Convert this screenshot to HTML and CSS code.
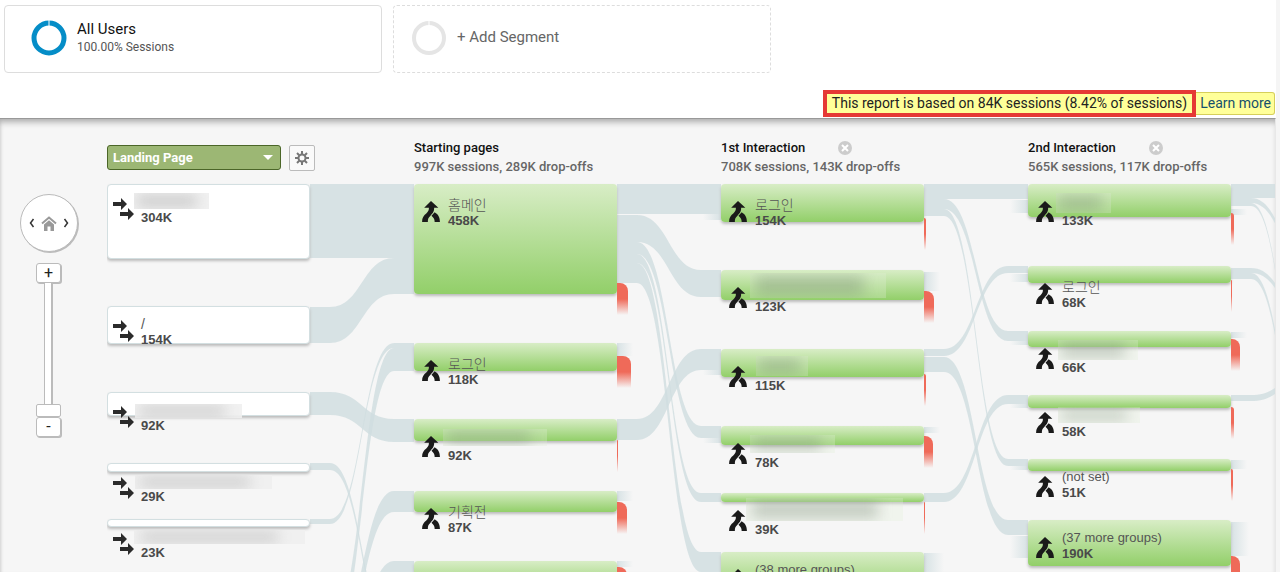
FILE: index.html
```html
<!DOCTYPE html>
<html lang="ko">
<head>
    <meta charset="UTF-8">
    <meta name="viewport" content="width=device-width, initial-scale=1.0">
    <title>Behavior Flow</title>
    <link rel="stylesheet" href="styles.css">
</head>
<body>
    <header class="report-header">
        <div class="segments">
            <button type="button" class="segment">
                <svg class="segment-ring" width="36" height="36" viewBox="0 0 36 36" fill="none">
                    <circle cx="18" cy="18" r="15" stroke="#058dc7" stroke-width="5"/>
                    <path d="M18 0V6" stroke="#fff" stroke-width="1"/>
                </svg>
                <span class="segment-text">
                    <span class="segment-name">All Users</span>
                    <span class="segment-share">100.00% Sessions</span>
                </span>
            </button>
            <button type="button" class="segment segment-add">
                <svg class="segment-ring" width="36" height="36" viewBox="0 0 36 36" fill="none">
                    <circle cx="18" cy="18" r="15" stroke="#e5e5e5" stroke-width="4"/>
                    <path d="M18 0V6" stroke="#fff" stroke-width="1"/>
                </svg>
                <span class="segment-label">+ Add Segment</span>
            </button>
        </div>

        <div class="notice">
            <span class="notice-text">This report is based on 84K sessions (8.42% of sessions)</span>
            <a class="notice-link" href="#">Learn more</a>
        </div>
    </header>

    <main class="flow">
        <!-- Pan and zoom controls -->
        <div class="controls">
            <div class="pan">
                <button type="button" class="pan-arrow" aria-label="Previous step">
                    <svg width="6" height="10" viewBox="0 0 6 10" fill="none"><path d="M4.500 1L1.500 5L4.500 9" stroke="#333" stroke-width="1.500"/></svg>
                </button>
                <button type="button" class="pan-home" aria-label="Home">
                    <svg width="16" height="15" viewBox="0 0 16 15">
                        <path d="M1 7.500L8 1.500L15 7.500" fill="none" stroke="#999" stroke-width="2"/>
                        <path d="M3 8.500L8 4.300L13 8.500V15H9.500V10.500H6.500V15H3Z" fill="#999"/>
                    </svg>
                </button>
                <button type="button" class="pan-arrow" aria-label="Next step">
                    <svg width="6" height="10" viewBox="0 0 6 10" fill="none"><path d="M1.500 1L4.500 5L1.500 9" stroke="#333" stroke-width="1.500"/></svg>
                </button>
            </div>
            <button type="button" class="zoom-button" aria-label="Zoom in">+</button>
            <input class="zoom-slider" type="range" min="0" max="10" value="0" aria-label="Zoom level">
            <button type="button" class="zoom-button" aria-label="Zoom out">-</button>
        </div>

        <div class="chart">
            <div class="steps">
                <div class="dimension">
                    <span class="dimension-box">
                        <select class="dimension-select" aria-label="Dimension">
                            <option>Landing Page</option>
                        </select>
                        <svg class="dimension-caret" width="10" height="5" viewBox="0 0 10 5"><path d="M0 0H10L5 5Z" fill="#fff"/></svg>
                    </span>
                    <button type="button" class="dimension-settings" aria-label="Settings">
                        <svg width="14" height="14" viewBox="0 0 14 14" fill="none" stroke="#777">
                            <circle cx="7" cy="7" r="3.500" stroke-width="2"/>
                            <path d="M7 0V3M7 11V14M0 7H3M11 7H14M2 2L4.200 4.200M9.800 9.800L12 12M12 2L9.800 4.200M4.200 9.800L2 12" stroke-width="2"/>
                        </svg>
                    </button>
                </div>
                <div class="step">
                    <div class="step-title">Starting pages</div>
                    <div class="step-total">997K sessions, 289K drop-offs</div>
                </div>
                <div class="step">
                    <div class="step-title">1st Interaction
                        <button type="button" class="step-remove" aria-label="Remove step">
                            <svg width="14" height="14" viewBox="0 0 14 14"><circle cx="7" cy="7" r="7" fill="#ccc"/><path d="M4 4L10 10M10 4L4 10" stroke="#fff" stroke-width="2"/></svg>
                        </button>
                    </div>
                    <div class="step-total">708K sessions, 143K drop-offs</div>
                </div>
                <div class="step">
                    <div class="step-title">2nd Interaction
                        <button type="button" class="step-remove" aria-label="Remove step">
                            <svg width="14" height="14" viewBox="0 0 14 14"><circle cx="7" cy="7" r="7" fill="#ccc"/><path d="M4 4L10 10M10 4L4 10" stroke="#fff" stroke-width="2"/></svg>
                        </button>
                    </div>
                    <div class="step-total">565K sessions, 117K drop-offs</div>
                </div>
            </div>

            <div class="canvas" id="canvas">
                <svg class="links" id="links">
                    <defs>
                        <linearGradient id="fade-out"><stop offset="0" stop-color="#cfdde0"/><stop offset="1" stop-color="#cfdde0" stop-opacity="0"/></linearGradient>
                        <linearGradient id="fade-in"><stop offset="0" stop-color="#cfdde0" stop-opacity="0"/><stop offset="1" stop-color="#cfdde0"/></linearGradient>
                    </defs>
                </svg>
            </div>
        </div>
    </main>

    <script src="script.js"></script>
</body>
</html>
```

FILE: styles.css
```css
* {
    box-sizing: border-box;
}

body {
    display: flex;
    flex-direction: column;
    height: 100vh;
    margin: 0;
    padding-right: 4px;
    overflow: hidden;
    background: #f5f5f5;
    font-family: Roboto, "Noto Sans CJK KR", sans-serif;
}

button {
    margin: 0;
    padding: 0;
    border: 0;
    background: none;
    font-family: inherit;
    cursor: pointer;
}

svg {
    display: block;
}

/* Header */
.report-header {
    flex: none;
    padding-top: 5px;
    background: #fff;
}

.segments {
    display: flex;
    gap: 11px;
    padding-left: 4px;
}

.segment {
    display: flex;
    flex: 0 1 378px;
    align-items: center;
    gap: 10px;
    height: 68px;
    padding: 0 0 2px 26px;
    border: 1px solid #ddd;
    border-radius: 4px;
    text-align: left;
}

.segment-add {
    padding-left: 17px;
    border-style: dashed;
}

.segment-name {
    display: block;
    color: #111;
    font-size: 15px;
    line-height: 18px;
}

.segment-share {
    display: block;
    padding-bottom: 1px;
    color: #555;
    font-size: 12px;
    line-height: 18px;
}

.segment-label {
    padding-bottom: 2px;
    color: #666;
    font-size: 15px;
    line-height: 18px;
}

.notice {
    display: flex;
    justify-content: flex-end;
    align-items: center;
    margin-top: 17px;
    padding: 0 1px 1px 0;
    font-size: 14px;
}

.notice-text {
    height: 27px;
    padding: 0 5px;
    border: 4px solid #e53935;
    background: #ffff99;
    color: #222;
    line-height: 19px;
    white-space: nowrap;
}

.notice-link {
    height: 23px;
    padding: 0 3px 0 4px;
    border: 1px solid #d6cf5a;
    border-left: 0;
    border-radius: 0 3px 3px 0;
    background: #ffff99;
    color: #15506b;
    line-height: 21px;
    text-decoration: none;
    white-space: nowrap;
}

/* Flow */
.flow {
    display: grid;
    flex: 1;
    grid-template-columns: 107px 1fr;
    min-height: 0;
    overflow: hidden;
    border-top: 1px solid #999;
    border-right: 1px solid #e8e8e8;
    background: #f6f6f6;
    box-shadow: inset 0 6px 6px -3px #aaa, inset 3px 0 3px -2px #ddd;
}

.controls {
    display: flex;
    flex-direction: column;
    align-items: center;
    padding: 75px 10px 0 0;
}

.pan {
    display: flex;
    justify-content: center;
    align-items: center;
    gap: 6px;
    width: 58px;
    height: 58px;
    margin-bottom: 11px;
    border: 1px solid #bbb;
    border-radius: 50%;
    background: #fff;
    box-shadow: 1px 1px 0 #bbb;
}

.zoom-button {
    width: 25px;
    height: 20px;
    border: 1px solid #bbb;
    border-radius: 3px;
    background: #fff;
    box-shadow: 1px 1px 0 #bbb;
    color: #222;
    font-size: 16px;
    line-height: 16px;
}

.zoom-slider {
    width: 25px;
    height: 134px;
    margin: 0;
    appearance: none;
    background: none;
    writing-mode: vertical-lr;
    direction: rtl;
}

.zoom-slider::-webkit-slider-runnable-track {
    width: 9px;
    border: solid #bbb;
    border-width: 0 2px 0 1px;
    background: #fff;
}

.zoom-slider::-webkit-slider-thumb {
    width: 25px;
    height: 13px;
    margin-left: -9px;
    appearance: none;
    border: 1px solid #bbb;
    border-radius: 2px;
    background: #fff;
}

.chart {
    min-width: 0;
    overflow: hidden;
}

.steps {
    display: grid;
    grid-template-columns: repeat(4, 307px);
    height: 65px;
    padding-top: 19px;
}

.dimension {
    display: flex;
    gap: 8px;
    padding-top: 7px;
}

.dimension-box {
    position: relative;
}

.dimension-select {
    display: block;
    width: 174px;
    height: 25px;
    padding: 0 5px;
    appearance: none;
    border: 1px solid #4b6628;
    border-radius: 3px;
    background: #9cb774;
    color: #fff;
    font-family: inherit;
    font-size: 13px;
    font-weight: bold;
}

.dimension-caret {
    position: absolute;
    top: 10px;
    right: 8px;
    pointer-events: none;
}

.dimension-settings {
    display: flex;
    justify-content: center;
    align-items: center;
    width: 26px;
    height: 26px;
    border: 1px solid #bbb;
    border-radius: 2px;
    background: #fafafa;
}

.step {
    font-size: 13px;
    font-weight: 500;
    line-height: 19px;
}

.step-title {
    display: flex;
    align-items: center;
    gap: 33px;
    color: #111;
}

.step-total {
    color: #666;
}

/* Nodes and links of the diagram */
.canvas {
    position: relative;
    height: 600px;
}

.links {
    position: absolute;
    width: 100%;
    height: 100%;
}

.link {
    fill: #cfdde0;
    fill-opacity: 0.8;
}

.node {
    position: absolute;
    width: 203px;
    border-radius: 4px;
    background: linear-gradient(#d8edc6, #92cf69);
    box-shadow: 0 2px 3px #bbb;
}

.node-landing {
    border: 1px solid #d3dfe1;
    background: #fff;
}

.node-info {
    position: absolute;
    display: grid;
    grid-template-columns: 18px auto;
    column-gap: 8px;
    padding: 12px 0 0 8px;
    color: #555;
    font-family: "Liberation Sans", "Noto Sans CJK KR", sans-serif;
    font-size: 13px;
    line-height: 16px;
    white-space: nowrap;
}

.node-info.landing {
    grid-template-columns: 22px auto;
    column-gap: 6px;
    padding: 9px 0 0 6px;
}

.node-icon {
    margin-top: 5px;
}

.node-text {
    padding-top: 1px;
}

.node-text.latin {
    margin-top: -2px;
    padding-top: 0;
}

.node-name {
    height: 16px;
}

.node-name:lang(ko) {
    font-size: 14px;
    font-weight: 300;
}

.node-value {
    color: #4a4a4a;
    font-weight: bold;
}

.redacted {
    position: absolute;
    overflow: hidden;
    background: rgba(225, 238, 215, 0.3);
}

.redacted::after {
    content: "";
    position: absolute;
    inset: 3px 16% 3px 4%;
    background: rgba(110, 125, 105, 0.35);
    filter: blur(7px);
}

.redacted.landing {
    background: rgba(240, 240, 240, 0.9);
}

.redacted.landing::after {
    background: #c4c4c4;
}

.dropoff {
    position: absolute;
    height: 32px;
    border-top-right-radius: 8px;
    background: linear-gradient(#ef6a59 50%, rgba(239, 106, 89, 0));
}
```

FILE: script.js
```js
const STEP = 307;
const NODE_WIDTH = 203;
const BEND = 20;

// [column, top, height, name, value]
const nodes = [
    [0, 0, 75, '', '304K'],
    [0, 122, 38, '/', '154K'],
    [0, 208, 24, '', '92K'],
    [0, 279, 9, '', '29K'],
    [0, 335, 8, '', '23K'],
    [1, 0, 110, '홈메인', '458K'],
    [1, 159, 28, '로그인', '118K'],
    [1, 235, 22, '', '92K'],
    [1, 307, 21, '기획전', '87K'],
    [1, 377, 30, '', ''],
    [2, 0, 38, '로그인', '154K'],
    [2, 86, 30, '', '123K'],
    [2, 165, 28, '', '115K'],
    [2, 242, 19, '', '78K'],
    [2, 309, 9, '', '39K'],
    [2, 368, 44, '(38 more groups)', ''],
    [3, 0, 33, '', '133K'],
    [3, 82, 17, '로그인', '68K'],
    [3, 147, 16, '', '66K'],
    [3, 211, 13, '', '58K'],
    [3, 275, 12, '(not set)', '51K'],
    [3, 336, 46, '(37 more groups)', '190K']
];

// [column, source top, target top, thickness]
const links = [
    [0, 0, 0, 74],
    [0, 123, 74, 36],
    [0, 208, 235, 23],
    [0, 279, 450, 7],
    [0, 335, 159, 5],
    [0, 440, 164, 23],
    [0, 460, 307, 21],
    [0, 520, 377, 20],
    [1, 0, 0, 30],
    [1, 31, 86, 27],
    [1, 58, 242, 12],
    [1, 70, 309, 9],
    [1, 79, 368, 20],
    [1, 235, 165, 21],
    [2, 0, 0, 15],
    [2, 15, 147, 10],
    [2, 25, 275, 7],
    [2, 165, 82, 7],
    [2, 173, 336, 15],
    [2, 309, 211, 9],
    [3, 0, 0, 14],
    [3, 14, 90, 5],
    [3, 19, 260, 3],
    [3, 84, 140, 5],
    [3, 89, 300, 6],
    [3, 211, 185, 6]
];

// Traffic whose other end is not drawn: [x, top, width, height, gradient]
const stubs = [
    [510, 159, 16, 13, 'fade-out'],
    [510, 307, 16, 10, 'fade-out'],
    [510, 377, 16, 6, 'fade-out'],
    [817, 88, 16, 19, 'fade-out'],
    [817, 243, 16, 6, 'fade-out'],
    [817, 369, 20, 30, 'fade-out'],
    [1124, 25, 16, 6, 'fade-out'],
    [1124, 148, 16, 6, 'fade-out'],
    [1124, 276, 16, 9, 'fade-out'],
    [1124, 338, 18, 34, 'fade-out'],
    [596, 30, 18, 6, 'fade-in'],
    [596, 186, 18, 5, 'fade-in'],
    [596, 254, 18, 5, 'fade-in'],
    [903, 16, 18, 13, 'fade-in'],
    [903, 90, 18, 8, 'fade-in'],
    [903, 157, 18, 4, 'fade-in'],
    [903, 220, 18, 4, 'fade-in'],
    [903, 282, 18, 4, 'fade-in'],
    [903, 352, 18, 22, 'fade-in']
];

// [column, top, width]
const dropoffs = [
    [1, 99, 11], [1, 172, 14], [1, 256, 1], [1, 318, 10], [1, 383, 10],
    [2, 34, 2], [2, 107, 10], [2, 190, 2], [2, 252, 9], [2, 318, 1],
    [3, 29, 3], [3, 96, 1], [3, 155, 9], [3, 223, 3], [3, 285, 2], [3, 372, 9]
];

// Hidden page names: [x, top, width, height]
const redacted = [
    [27, 9, 75, 16], [28, 220, 107, 14], [28, 291, 137, 14], [27, 346, 171, 14],
    [336, 245, 104, 17], [643, 89, 136, 25], [649, 172, 52, 20], [643, 251, 85, 18],
    [639, 314, 157, 23], [949, 9, 55, 20], [951, 156, 80, 20], [951, 223, 82, 16]
];

const LANDING_ICON = '<svg class="node-icon" width="22" height="23" viewBox="0 0 22 23" fill="#2b2b2b">' +
    '<path d="M0 4H8V0L14 6L8 12V8H0Z"/><path d="M7 14H15V10L21 16L15 22V18H7Z"/></svg>';
const MERGE_ICON = '<svg class="node-icon" width="18" height="21" viewBox="0 0 17 20" fill="#1a1a1a">' +
    '<path d="M8.500 0L15.500 6.500H11.500C11.500 10.500 10 12 8 14C5.800 16 5.500 17 5.500 20H0C0 16 1.500 14 4 12C6 10 6.500 9 6.500 6.500H2Z"/>' +
    '<path d="M9 14L12 10.800C15.500 13 17 15.500 17 20H12C12 17 11 16 9 14Z"/></svg>';

const canvas = document.getElementById('canvas');
const svg = document.getElementById('links');

function addShape(tag, attributes) {
    const shape = document.createElementNS('http://www.w3.org/2000/svg', tag);
    for (const name in attributes) {
        shape.setAttribute(name, attributes[name]);
    }
    svg.appendChild(shape);
}

function addBox(className, left, top, width, height) {
    const box = document.createElement('div');
    box.className = className;
    box.style.left = left + 'px';
    box.style.top = top + 'px';
    if (width) box.style.width = width + 'px';
    if (height) box.style.height = height + 'px';
    canvas.appendChild(box);
    return box;
}

links.forEach(function([column, from, to, size]) {
    const x0 = column * STEP + NODE_WIDTH;
    const x1 = (column + 1) * STEP;
    const a = x0 + BEND;
    const b = x1 - BEND;
    const mid = (a + b) / 2;
    addShape('path', {
        class: 'link',
        d: `M${x0} ${from}H${a}C${mid} ${from} ${mid} ${to} ${b} ${to}H${x1}V${to + size}H${b}` +
            `C${mid} ${to + size} ${mid} ${from + size} ${a} ${from + size}H${x0}Z`
    });
});

stubs.forEach(function([x, y, width, height, gradient]) {
    addShape('rect', { x, y, width, height, fill: `url(#${gradient})`, 'fill-opacity': 0.8 });
});

nodes.forEach(function([column, top, height]) {
    addBox(column === 0 ? 'node node-landing' : 'node', column * STEP, top, 0, height);
});

redacted.forEach(function([x, top, width, height]) {
    addBox(x < NODE_WIDTH ? 'redacted landing' : 'redacted', x, top, width, height);
});

nodes.forEach(function([column, top, height, name, value]) {
    const info = addBox(column === 0 ? 'node-info landing' : 'node-info', column * STEP, top);
    const latin = name.startsWith('(');
    info.innerHTML = (column === 0 ? LANDING_ICON : MERGE_ICON) +
        `<div class="node-text${latin ? ' latin' : ''}">` +
        `<div class="node-name" lang="${latin ? 'en' : 'ko'}">${name}</div>` +
        `<div class="node-value">${value}</div></div>`;
});

dropoffs.forEach(function([column, top, width]) {
    addBox('dropoff', column * STEP + NODE_WIDTH, top, width);
});
```
